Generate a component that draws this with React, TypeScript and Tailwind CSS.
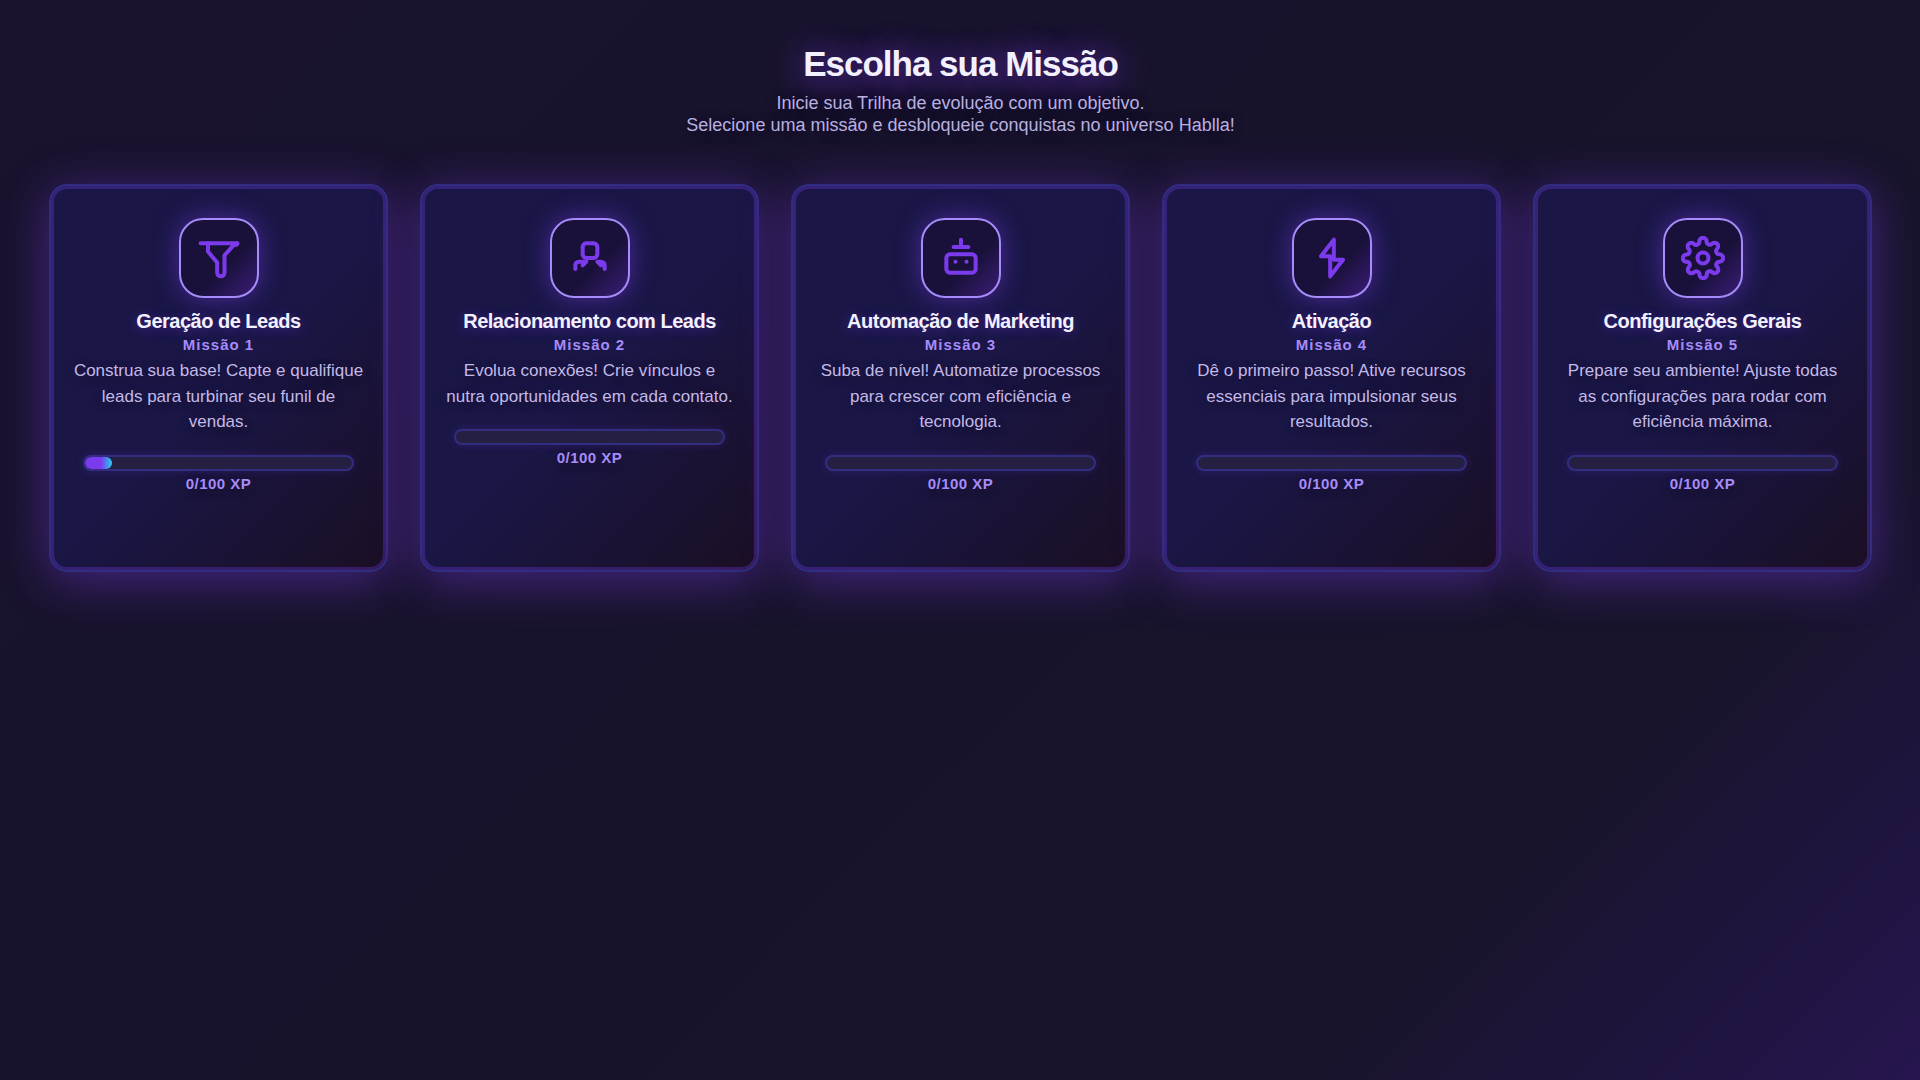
import type { ReactNode } from "react";

type Mission = {
  title: string;
  description: string;
  fill: number;
  icon: ReactNode;
};

const missions: Mission[] = [
  {
    title: "Geração de Leads",
    description: "Construa sua base! Capte e qualifique leads para turbinar seu funil de vendas.",
    fill: 10,
    icon: (
      <>
        <path d="M2 4h20" />
        <path d="M6 4v4.5l5 6V20a2 2 0 0 0 4 0V10.5l5-5.5q1.7 0 2-1" />
      </>
    ),
  },
  {
    title: "Relacionamento com Leads",
    description: "Evolua conexões! Crie vínculos e nutra oportunidades em cada contato.",
    fill: 0,
    icon: (
      <>
        <rect x="8" y="4" width="8" height="8" rx="2" />
        <path d="M4 18v-2a2 2 0 0 1 2-2h4l-2 2" />
        <path d="M20 18v-2a2 2 0 0 0-2-2h-2l2 2" />
      </>
    ),
  },
  {
    title: "Automação de Marketing",
    description: "Suba de nível! Automatize processos para crescer com eficiência e tecnologia.",
    fill: 0,
    icon: (
      <>
        <rect x="4" y="10" width="16" height="10" rx="2" />
        <path d="M12 2v4M8 6h8M9 14h.01M15 14h.01" />
      </>
    ),
  },
  {
    title: "Ativação",
    description: "Dê o primeiro passo! Ative recursos essenciais para impulsionar seus resultados.",
    fill: 0,
    icon: <path d="M13 2v11h5l-7 9V11H6z" />,
  },
  {
    title: "Configurações Gerais",
    description: "Prepare seu ambiente! Ajuste todas as configurações para rodar com eficiência máxima.",
    fill: 0,
    icon: (
      <>
        <circle cx="12" cy="12" r="3" />
        <path d="M19.4 15a1.65 1.65 0 0 0 .33 1.82l.06.06a2 2 0 0 1 0 2.83 2 2 0 0 1-2.83 0l-.06-.06a1.65 1.65 0 0 0-1.82-.33 1.65 1.65 0 0 0-1 1.51V21a2 2 0 0 1-2 2 2 2 0 0 1-2-2v-.09A1.65 1.65 0 0 0 9 19.4a1.65 1.65 0 0 0-1.82.33l-.06.06a2 2 0 0 1-2.83 0 2 2 0 0 1 0-2.83l.06-.06a1.65 1.65 0 0 0 .33-1.82 1.65 1.65 0 0 0-1.51-1H3a2 2 0 0 1-2-2 2 2 0 0 1 2-2h.09A1.65 1.65 0 0 0 4.6 9a1.65 1.65 0 0 0-.33-1.82l-.06-.06a2 2 0 0 1 0-2.83 2 2 0 0 1 2.83 0l.06.06a1.65 1.65 0 0 0 1.82.33H9a1.65 1.65 0 0 0 1-1.51V3a2 2 0 0 1 2-2 2 2 0 0 1 2 2v.09a1.65 1.65 0 0 0 1 1.51 1.65 1.65 0 0 0 1.82-.33l.06-.06a2 2 0 0 1 2.83 0 2 2 0 0 1 0 2.83l-.06.06a1.65 1.65 0 0 0-.33 1.82V9a1.65 1.65 0 0 0 1.51 1H21a2 2 0 0 1 2 2 2 2 0 0 1-2 2h-.09a1.65 1.65 0 0 0-1.51 1z" />
      </>
    ),
  },
];

function MissionCard({ mission, number }: { mission: Mission; number: number }) {
  return (
    <article className="flex min-h-[388px] flex-col items-center rounded-[18px] border-2 border-[#312e81] bg-[linear-gradient(135deg,#1a1747_0%,#1a1747_50%,#1a0f24_100%)] px-[17px] py-8 text-center shadow-[0_8px_48px_rgba(124,58,237,0.45),inset_0_0_0_3px_rgba(124,58,237,0.3)]">
      <div className="flex size-20 items-center justify-center rounded-3xl border-2 border-[#a78bfa] bg-[linear-gradient(135deg,#19113a_0%,#19113a_60%,#3b1d78_100%)] shadow-[0_0_24px_rgba(124,58,237,0.5)]">
        <svg
          viewBox="0 0 24 24"
          className="size-11 fill-none stroke-[#7c3aed] stroke-[2.2]"
          strokeLinecap="round"
          strokeLinejoin="round"
          aria-hidden="true"
        >
          {mission.icon}
        </svg>
      </div>
      <h2 className="mt-3 text-[20px] leading-[22px] font-bold tracking-[-0.5px] text-[#f3f0ff] [text-shadow:0_2px_12px_rgba(124,58,237,0.45)]">
        {mission.title}
      </h2>
      <p className="mt-1 text-[15px] leading-[18px] font-bold tracking-[1px] text-[#a78bfa]">Missão {number}</p>
      <p className="mt-1 px-[5px] text-[17px] leading-normal text-[#c3b9ea] [text-shadow:0_2px_8px_#18122b]">
        {mission.description}
      </p>
      <div
        role="progressbar"
        aria-label={mission.title}
        aria-valuemin={0}
        aria-valuemax={100}
        aria-valuenow={0}
        className="mt-5 h-4 w-9/10 overflow-hidden rounded-lg border-2 border-[#312e81] bg-[#252042] shadow-[0_0_8px_rgba(124,58,237,0.2)]"
      >
        <div
          className="h-full rounded-lg bg-[linear-gradient(90deg,#7c3aed_0%,#7c3aed_60%,#22d3ee_100%)]"
          style={{ width: `${mission.fill}%` }}
        />
      </div>
      <p className="mt-1 text-[15px] leading-[18px] font-bold tracking-[0.5px] text-[#a78bfa] [text-shadow:0_2px_8px_#18122b]">
        0/100 XP
      </p>
    </article>
  );
}

export default function App() {
  return (
    <main className="min-h-screen bg-[linear-gradient(135deg,#19132e_0%,#18142b_79%,#26154f_100%)] pt-10 pr-12 pb-12 pl-[49px] font-['Liberation_Sans',Arial,sans-serif]">
      <header className="text-center">
        <h1 className="text-[35px] leading-12 font-bold tracking-[-1px] text-[#f3f0ff] [text-shadow:0_2px_32px_rgba(124,58,237,0.95)]">
          Escolha sua Missão
        </h1>
        <p className="mt-1 text-[18px] leading-[22px] text-[#b9b0e0] [text-shadow:0_2px_12px_#120b2a]">
          Inicie sua Trilha de evolução com um objetivo.
          <br />
          Selecione uma missão e desbloqueie conquistas no universo Hablla!
        </p>
      </header>
      <section className="mt-12 grid grid-cols-[repeat(auto-fit,minmax(300px,1fr))] gap-8">
        {missions.map((mission, i) => (
          <MissionCard key={mission.title} mission={mission} number={i + 1} />
        ))}
      </section>
    </main>
  );
}
